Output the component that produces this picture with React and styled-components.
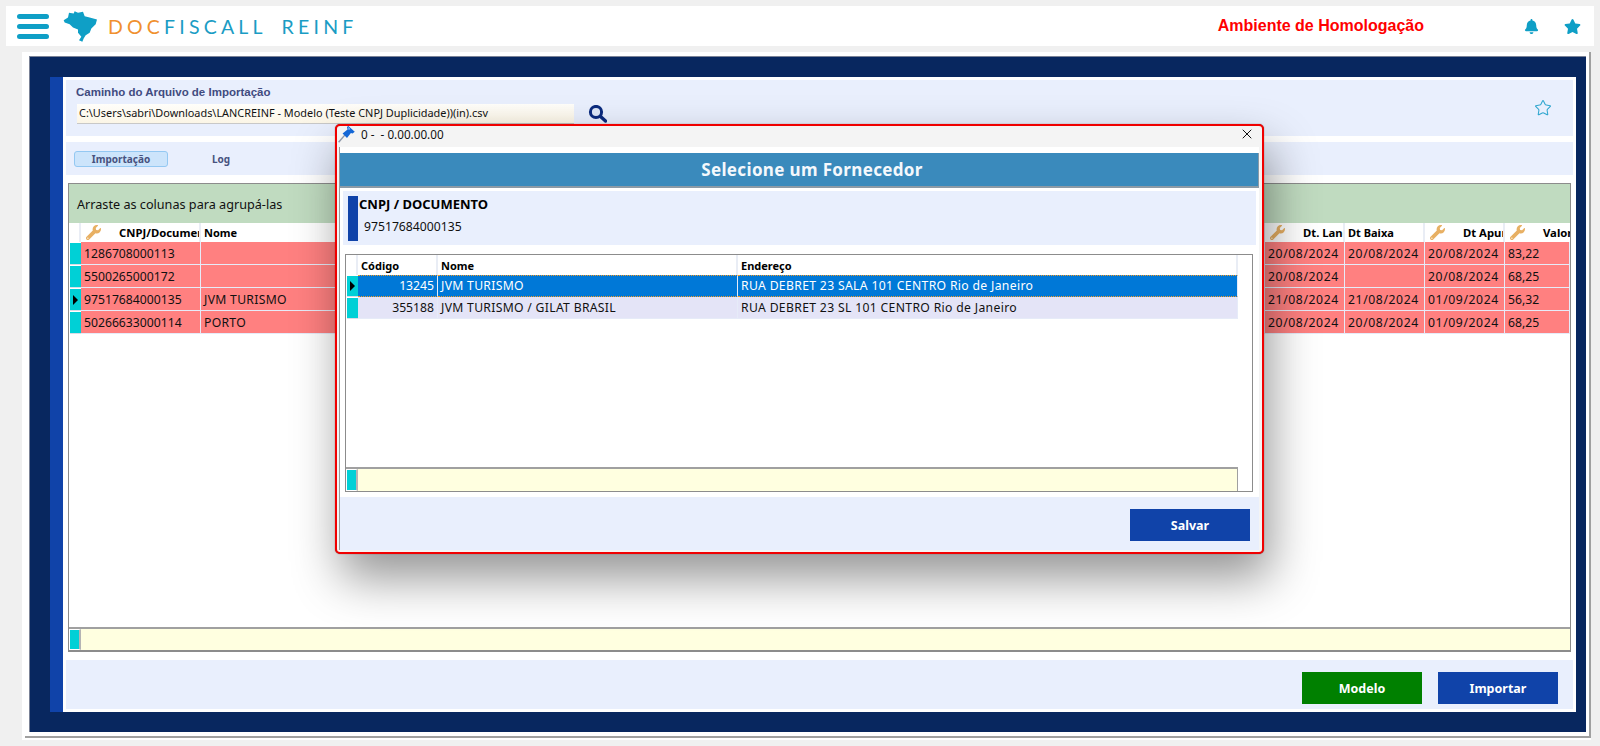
import React from "react";
import styled, { createGlobalStyle } from "styled-components";
import { FaBell, FaStar, FaWrench } from "react-icons/fa";
import { Star, X } from "lucide-react";

const GlobalStyle = createGlobalStyle`
  html, body {
    margin: 0;
    padding: 0;
    background: #f0f0f0;
  }
  * { box-sizing: border-box; }
`;

const Page = styled.div`
  position: relative;
  width: 1600px;
  height: 746px;
  padding: 6px 6px 6px 6px;
  overflow: hidden;
  font-family: "Noto Sans", "Open Sans", sans-serif;
  font-size: 12.2px;
  color: #111;
`;

const TopBar = styled.header`
  display: flex;
  align-items: center;
  height: 40px;
  padding: 0 13px 0 11px;
  background: #fff;
`;

const Burger = styled.div`
  display: flex;
  flex-direction: column;
  gap: 5px;
  width: 32px;
`;

const BurgerBar = styled.span`
  height: 5px;
  border-radius: 3px;
  background: #0f9fc6;
`;

const LogoMark = styled.svg`
  width: 35px;
  height: 33px;
  margin-left: 14px;
  fill: #0f9fc6;
`;

const LogoText = styled.div`
  margin-left: 10px;
  font-family: Lato, sans-serif;
  font-size: 19.5px;
  letter-spacing: 4.2px;
  word-spacing: -1.5px;
  white-space: pre;
  color: #1a9cc4;
`;

const LogoDoc = styled.span`
  color: #f0902e;
`;

const EnvLabel = styled.div`
  margin-left: auto;
  margin-right: 100px;
  font-family: "Liberation Sans", sans-serif;
  font-size: 16px;
  font-weight: 700;
  color: #ff0000;
`;

const TopIcons = styled.div`
  display: flex;
  align-items: center;
  gap: 25px;
  color: #0f9fc6;
`;

const Frame = styled.div`
  height: 688px;
  width: 1569px;
  margin: 6px 0 0 16px;
  padding: 0 0 2px 3px;
  background: #fff;
`;

const FrameEdge = styled.div`
  height: 100%;
  padding: 4px 3px 4px 4px;
  border-right: 2px solid #a0a0a0;
  border-bottom: 2px solid #a0a0a0;
`;

const Navy = styled.div`
  display: flex;
  height: 100%;
  padding: 20px 10px 20px 20px;
  background: #08275f;
  border-top: 1px solid #7a8296;
  border-left: 1px solid #7a8296;
`;

const SideStrip = styled.div`
  width: 13px;
  background: #1043a9;
`;

const Main = styled.main`
  flex: 1;
  display: flex;
  flex-direction: column;
  min-width: 0;
  padding: 3px;
  background: #fff;
`;

const PathPanel = styled.section`
  display: flex;
  height: 56px;
  padding: 4px 21px 0 11px;
  background: #e9effd;
`;

const PathColumn = styled.div`
  display: flex;
  flex-direction: column;
`;

const PathLabel = styled.label`
  height: 20px;
  margin-left: -1px;
  font-family: "Liberation Sans", sans-serif;
  font-size: 11.5px;
  font-weight: 700;
  line-height: 17px;
  color: #414b80;
`;

const PathRow = styled.div`
  display: flex;
  align-items: center;
  gap: 14px;
`;

const PathInput = styled.div`
  width: 497px;
  height: 20px;
  padding-left: 2px;
  font-size: 10.9px;
  line-height: 18px;
  white-space: nowrap;
  background: linear-gradient(#fffefa, #fbf5e6);
  border-bottom: 1px solid #c8c8c8;
`;

const FavIcon = styled.div`
  margin: 15px 0 0 auto;
  color: #2fa6cf;
`;

const TabPanel = styled.nav`
  display: flex;
  align-items: center;
  height: 33px;
  margin-top: 6px;
  padding-left: 8px;
  background: #e9effd;
`;

const Tab = styled.div`
  width: 94px;
  height: 16px;
  margin-right: 6px;
  font-size: 10px;
  font-weight: 700;
  line-height: 15px;
  text-align: center;
  color: #47527f;
  background: ${(p) => (p.$active ? "#cce4fb" : "transparent")};
  border: 1px solid ${(p) => (p.$active ? "#94c8f2" : "transparent")};
  border-radius: 3px;
`;

const DataGrid = styled.section`
  flex: 1;
  display: flex;
  flex-direction: column;
  min-height: 0;
  margin: 8px 2px 0;
  background: #fff;
  border: 1px solid #8c8c8c;
  border-bottom-width: 2px;
`;

const GroupBar = styled.div`
  height: 39px;
  padding-left: 8px;
  font-size: 12.65px;
  line-height: 41px;
  background: #c0dbc0;
`;

const Table = styled.div`
  flex: 1;
  display: grid;
  grid-template-columns: ${(p) => p.$columns};
  grid-template-rows: ${(p) => p.$headHeight}px;
  grid-auto-rows: ${(p) => p.$rowHeight}px;
  align-content: start;
  min-height: 0;
`;

const HeadCell = styled.div`
  display: flex;
  align-items: center;
  gap: ${(p) => (p.$keyed ? "18px" : "0")};
  padding-left: ${(p) => (p.$keyed ? "5px" : "3px")};
  overflow: hidden;
  font-size: ${(p) => (p.$keyed ? "11.3px" : "11px")};
  font-weight: 700;
  white-space: nowrap;
  background: #fff;
  border-right: ${(p) => (p.$last ? "0" : "2px solid #e9edf5")};
  color: #000;
`;

const KeyIcon = styled(FaWrench)`
  flex: none;
  width: 15px;
  height: 15px;
  color: #e8b063;
`;

const Indicator = styled.div`
  display: flex;
  align-items: center;
  justify-content: center;
  margin-left: 1px;
  background: #00d0d6;
  border-top: 1px solid #fff;
  border-bottom: 1px solid #d8dce6;

  &::after {
    content: "";
    display: ${(p) => (p.$current ? "block" : "none")};
    border-left: 5px solid #000;
    border-top: 5px solid transparent;
    border-bottom: 5px solid transparent;
  }
`;

const Cell = styled.div`
  padding-left: 3px;
  overflow: hidden;
  white-space: nowrap;
  line-height: ${(p) => p.$line || 22}px;
  letter-spacing: ${(p) => p.$spacing || 0}px;
  text-align: ${(p) => (p.$right ? "right" : "left")};
  padding-right: ${(p) => (p.$right ? "3px" : "0")};
  color: ${(p) => (p.$selected ? "#fff" : "#111")};
  background: ${(p) => (p.$selected ? "#0078d7" : p.$bg)};
  border-right: 1px solid #e6ebf8;
  border-bottom: 1px solid #e6ebf8;
  ${(p) =>
    p.$selected &&
    `
    border-top: 1px dotted #f59a23;
    border-bottom: 1px dotted #f59a23;
    line-height: 20px;
  `}
`;

const GridFooter = styled.div`
  display: flex;
  height: ${(p) => p.$height}px;
  width: ${(p) => p.$width};
  background: #ffffe0;
  border-top: 2px solid #a0a0a0;
  border-right: ${(p) => (p.$width === "100%" ? "0" : "1px solid #a0a0a0")};
`;

const FooterMark = styled.div`
  width: 12px;
  background: #00d0d6;
  border: 1px solid #fff;
  border-right: 2px solid #b4b4b4;
`;

const ActionBar = styled.footer`
  display: flex;
  justify-content: flex-end;
  gap: 16px;
  height: ${(p) => p.$height}px;
  margin-top: ${(p) => p.$top}px;
  padding: 12px ${(p) => p.$right}px 0 0;
  background: #e9effd;
`;

const ActionButton = styled.button`
  width: 120px;
  height: 32px;
  padding: 0;
  border: 0;
  font-family: "Noto Sans", sans-serif;
  font-size: 12.5px;
  font-weight: 700;
  color: #fff;
  background: ${(p) => (p.$green ? "#008000" : "#1043a9")};
`;

const Modal = styled.div`
  position: absolute;
  left: 335px;
  top: 124px;
  display: flex;
  flex-direction: column;
  width: 929px;
  height: 430px;
  padding-bottom: 2px;
  background: #f4f4f4;
  border: 2px solid #f00000;
  border-radius: 5px;
  box-shadow: 6px 24px 48px rgba(0, 0, 0, 0.42), 0 0 1px rgba(90, 0, 0, 0.8);
`;

const TitleBar = styled.div`
  flex: none;
  display: flex;
  align-items: center;
  gap: 1px;
  height: 21px;
  padding: 0 7px 5px 0;
  font-size: 11.7px;
  white-space: pre;
`;

const CloseButton = styled.div`
  display: flex;
  margin-left: auto;
  color: #111;
`;

const ModalBody = styled.div`
  flex: 1;
  display: flex;
  flex-direction: column;
  min-height: 0;
  margin: 0 3px 0 2px;
  padding-top: 6px;
  background: #fff;
  border-left: 1px solid #9a9a9a;
`;

const ModalHeading = styled.h2`
  flex: none;
  height: 35px;
  margin: 0;
  padding-left: 26px;
  font-size: 17px;
  font-weight: 700;
  letter-spacing: 0.35px;
  line-height: 34px;
  text-align: center;
  color: #f4f8fc;
  background: #3a8abc;
  border-right: 1px solid #8b9aa6;
  border-bottom: 2px solid #8b9aa6;
`;

const DocPanel = styled.div`
  flex: none;
  display: flex;
  gap: 1px;
  height: 54px;
  margin: 3px 3px 0;
  padding: 5px;
  background: #e9effd;
`;

const DocBar = styled.div`
  width: 10px;
  height: 45px;
  background: #1043a9;
`;

const DocTitle = styled.div`
  font-size: 13px;
  font-weight: 700;
  line-height: 16px;
  color: #000;
`;

const DocValue = styled.div`
  margin: 7px 0 0 5px;
  line-height: 16px;
`;

const ModalGrid = styled.div`
  flex: 1;
  display: flex;
  flex-direction: column;
  min-height: 0;
  margin: 9px 6px 0 5px;
  background: #fff;
  border: 1px solid #8c8c8c;
`;

const BrazilPoints =
  "162,40 175,32 178,18 192,20 195,13 205,18 220,15 225,28 240,32 262,38 258,52 245,65 240,78 228,85 222,95 218,105 208,100 215,90 205,78 205,68 190,62 180,52 165,47";

const mainColumns = "12px 120px 1fr 80px 80px 80px 65px";

const mainHead = [
  { label: "CNPJ/Documento", keyed: true },
  { label: "Nome" },
  { label: "Dt. Lançamento", keyed: true },
  { label: "Dt Baixa" },
  { label: "Dt Apuração", keyed: true },
  { label: "Valor", keyed: true },
];

const mainRows = [
  ["1286708000113", "", "20/08/2024", "20/08/2024", "20/08/2024", "83,22"],
  ["5500265000172", "", "20/08/2024", "", "20/08/2024", "68,25"],
  ["97517684000135", "JVM TURISMO", "21/08/2024", "21/08/2024", "01/09/2024", "56,32"],
  ["50266633000114", "PORTO", "20/08/2024", "20/08/2024", "01/09/2024", "68,25"],
];

// Noto runs a bit narrower than the original font on dates and capitals
const mainSpacing = [0, 0.3, 0.6, 0.6, 0.6, 0];

const supplierColumns = "12px 80px 300px 500px";

const supplierRows = [
  ["13245", "JVM TURISMO", "RUA DEBRET 23 SALA 101 CENTRO Rio de Janeiro"],
  ["355188", "JVM TURISMO / GILAT BRASIL", "RUA DEBRET 23 SL 101 CENTRO Rio de Janeiro"],
];

const supplierSpacing = [0, 0.3, 0.33];

const MagnifierIcon = () => (
  <svg width="19" height="18" viewBox="0 0 19 18" fill="none" stroke="#0b2b7e">
    <circle cx="8" cy="7" r="5.6" strokeWidth="3" fill="#dfe8f8" />
    <path d="M12.5 11.5 L17.5 16" strokeWidth="3.4" strokeLinecap="round" />
  </svg>
);

const PinIcon = () => (
  <svg width="20" height="20" viewBox="0 0 18 18">
    <path d="M1.5 16.5 L7 10" stroke="#8d97a8" strokeWidth="1.3" />
    <path d="M10 1.5 L16 7 L14 8.5 L12.5 8 L9 12.5 L5 8.5 L9.5 5 L9 3 Z" fill="#1467d6" />
    <path d="M10 2.5 L12 4.5 L10.5 5.5 Z" fill="#8fc2f7" />
  </svg>
);

const App = () => (
  <Page>
    <GlobalStyle />
    <TopBar>
      <Burger>
        <BurgerBar />
        <BurgerBar />
        <BurgerBar />
      </Burger>
      <LogoMark viewBox="160 10 105 98">
        <polygon points={BrazilPoints} />
      </LogoMark>
      <LogoText>
        <LogoDoc>DOC</LogoDoc>FISCALL  REINF
      </LogoText>
      <EnvLabel>Ambiente de Homologação</EnvLabel>
      <TopIcons>
        <FaBell size={15} />
        <FaStar size={17} />
      </TopIcons>
    </TopBar>

    <Frame>
      <FrameEdge>
        <Navy>
          <SideStrip />
          <Main>
            <PathPanel>
              <PathColumn>
                <PathLabel>Caminho do Arquivo de Importação</PathLabel>
                <PathRow>
                  <PathInput>
                    C:\Users\sabri\Downloads\LANCREINF - Modelo (Teste CNPJ Duplicidade))(in).csv
                  </PathInput>
                  <MagnifierIcon />
                </PathRow>
              </PathColumn>
              <FavIcon>
                <Star size={18} strokeWidth={1.4} />
              </FavIcon>
            </PathPanel>

            <TabPanel>
              <Tab $active>Importação</Tab>
              <Tab>Log</Tab>
            </TabPanel>

            <DataGrid>
              <GroupBar>Arraste as colunas para agrupá-las</GroupBar>
              <Table $columns={mainColumns} $headHeight={19} $rowHeight={23}>
                <HeadCell />
                {mainHead.map((col, index) => (
                  <HeadCell
                    key={col.label}
                    $keyed={col.keyed}
                    $last={index === mainHead.length - 1}
                  >
                    {col.keyed && <KeyIcon />}
                    {col.label}
                  </HeadCell>
                ))}
                {mainRows.map((row, rowIndex) => (
                  <React.Fragment key={row[0]}>
                    <Indicator $current={rowIndex === 2} />
                    {row.map((value, index) => (
                      <Cell
                        key={index}
                        $bg="#ff8080"
                        $line={24}
                        $spacing={mainSpacing[index]}
                      >
                        {value}
                      </Cell>
                    ))}
                  </React.Fragment>
                ))}
              </Table>
              <GridFooter $height={23} $width="100%">
                <FooterMark />
              </GridFooter>
            </DataGrid>

            <ActionBar $height={49} $top={8} $right={15}>
              <ActionButton $green>Modelo</ActionButton>
              <ActionButton>Importar</ActionButton>
            </ActionBar>
          </Main>
        </Navy>
      </FrameEdge>
    </Frame>

    <Modal>
      <TitleBar>
        <PinIcon />
        <span> 0 -  - 0.00.00.00</span>
        <CloseButton>
          <X size={16} strokeWidth={1.5} />
        </CloseButton>
      </TitleBar>
      <ModalBody>
        <ModalHeading>Selecione um Fornecedor</ModalHeading>
        <DocPanel>
          <DocBar />
          <div>
            <DocTitle>CNPJ / DOCUMENTO</DocTitle>
            <DocValue>97517684000135</DocValue>
          </div>
        </DocPanel>
        <ModalGrid>
          <Table $columns={supplierColumns} $headHeight={20} $rowHeight={22}>
            <HeadCell />
            <HeadCell>Código</HeadCell>
            <HeadCell>Nome</HeadCell>
            <HeadCell>Endereço</HeadCell>
            {supplierRows.map((row, rowIndex) => (
              <React.Fragment key={row[0]}>
                <Indicator $current={rowIndex === 0} />
                {row.map((value, index) => (
                  <Cell
                    key={index}
                    $right={index === 0}
                    $selected={rowIndex === 0}
                    $bg="#e4e4f7"
                    $spacing={supplierSpacing[index]}
                  >
                    {value}
                  </Cell>
                ))}
              </React.Fragment>
            ))}
          </Table>
          <GridFooter $height={24} $width="892px">
            <FooterMark />
          </GridFooter>
        </ModalGrid>
        <ActionBar $height={53} $top={5} $right={9}>
          <ActionButton>Salvar</ActionButton>
        </ActionBar>
      </ModalBody>
    </Modal>
  </Page>
);

export default App;
